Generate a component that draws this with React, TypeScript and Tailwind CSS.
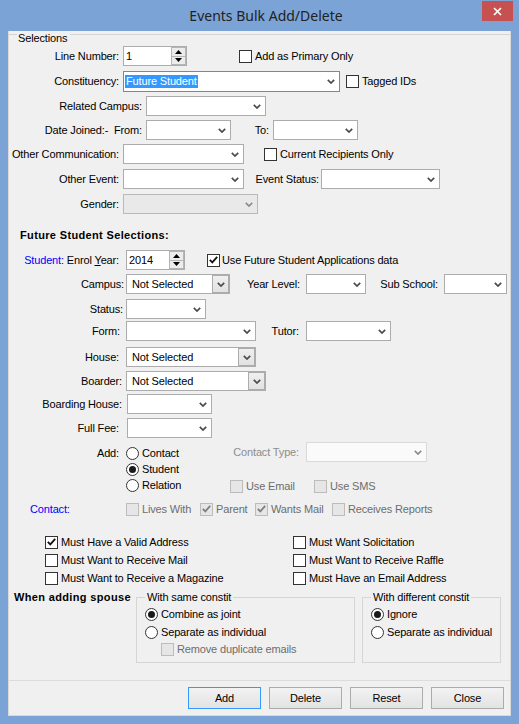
import React from "react";

type P = { className?: string; children?: React.ReactNode };

function Chevron({ disabled = false }: { disabled?: boolean }) {
  return (
    <svg width="8" height="5" viewBox="0 0 8 5" className="block">
      <path d="M0.8 0.8 L4 4 L7.2 0.8" fill="none" stroke={disabled ? "#8c8c8c" : "#4a4a4a"} strokeWidth="1.7" />
    </svg>
  );
}

function Lbl({ className = "", children }: P) {
  return <span className={`text-right whitespace-nowrap shrink-0 ${className}`}>{children}</span>;
}

function Combo({ className = "", children, variant = "normal" }: P & { variant?: "normal" | "disabled" | "light" }) {
  const box =
    variant === "disabled"
      ? "border-[#b9b9b9] bg-[#e9e9e9]"
      : variant === "light"
      ? "border-[#d9d9d9] bg-[#fafafa]"
      : "border-[#acacac] bg-white";
  return (
    <div className={`flex items-center h-[20px] shrink-0 border ${box} ${className}`}>
      <div className="flex-1 pl-[3px] whitespace-nowrap overflow-hidden">{children}</div>
      <div className="w-[17px] flex justify-center shrink-0">
        <Chevron disabled={variant !== "normal"} />
      </div>
    </div>
  );
}

function ComboBtn({ className = "", children }: P) {
  return (
    <div className={`flex items-center h-[20px] shrink-0 border border-[#acacac] bg-white ${className}`}>
      <div className="flex-1 pl-[5px] whitespace-nowrap overflow-hidden">{children}</div>
      <div className="w-[17px] h-full flex items-center justify-center bg-linear-to-b from-[#efefef] to-[#e2e2e2] border border-[#acacac]">
        <Chevron />
      </div>
    </div>
  );
}

function Spin({ className = "", value }: P & { value: string }) {
  return (
    <div className={`flex h-[20px] shrink-0 border border-[#acacac] bg-white ${className}`}>
      <span className="flex-1 pl-[2px] leading-[18px]">{value}</span>
      <div className="w-[15px] flex flex-col">
        <div className="flex-1 flex items-center justify-center bg-[#ececec] border border-[#b5b5b5]">
          <svg width="7" height="4" viewBox="0 0 7 4" className="block">
            <path d="M0 4 L3.5 0 L7 4Z" fill="#000" />
          </svg>
        </div>
        <div className="flex-1 flex items-center justify-center bg-[#ececec] border border-t-0 border-[#b5b5b5]">
          <svg width="7" height="4" viewBox="0 0 7 4" className="block">
            <path d="M0 0 L3.5 4 L7 0Z" fill="#000" />
          </svg>
        </div>
      </div>
    </div>
  );
}

function Check({ checked = false, disabled = false, className = "" }: { checked?: boolean; disabled?: boolean; className?: string }) {
  return (
    <span
      className={`w-[13px] h-[13px] shrink-0 border flex items-center justify-center ${
        disabled ? "border-[#bcbcbc] bg-[#e6e6e6]" : "border-[#333333] bg-white"
      } ${className}`}
    >
      {checked && (
        <svg width="9" height="8" viewBox="0 0 9 8" className="block">
          <path d="M0.8 3.8 L3.3 6.4 L8.2 0.8" fill="none" stroke={disabled ? "#7f7f7f" : "#111111"} strokeWidth="1.8" />
        </svg>
      )}
    </span>
  );
}

function Radio({ checked = false, className = "" }: { checked?: boolean; className?: string }) {
  return (
    <span className={`w-[13px] h-[13px] shrink-0 rounded-full border border-[#333333] bg-white flex items-center justify-center ${className}`}>
      {checked && <span className="w-[7px] h-[7px] rounded-full bg-[#1a1a1a]" />}
    </span>
  );
}

function Btn({ children, primary = false }: P & { primary?: boolean }) {
  return (
    <div
      className={`w-[73px] h-[22px] flex items-center justify-center border bg-linear-to-b from-[#f2f2f2] to-[#e3e3e3] ${
        primary ? "border-[#3399ff]" : "border-[#acacac]"
      }`}
    >
      {children}
    </div>
  );
}

export default function App() {
  return (
    <div className="w-[519px] h-[724px] bg-[#7ba3d6] font-['Liberation_Sans',Arial,sans-serif] text-black select-none">
      <div className="relative h-[31px] flex items-center justify-center pl-[13px]">
        <span className="font-['Noto_Sans',sans-serif] text-[14px] text-[#222222]">Events Bulk Add/Delete</span>
        <div className="absolute right-[6px] top-[1px] w-[31px] h-[20px] bg-[#c75050] flex items-center justify-center">
          <svg width="9" height="9" viewBox="0 0 9 9" className="block">
            <path d="M1 1 L8 8 M8 1 L1 8" stroke="white" strokeWidth="1.7" />
          </svg>
        </div>
      </div>

      <div className="mx-[8px] h-[685px] bg-[#f0f0f0] border-x border-b border-[#d9d9d9] flex flex-col text-[11px] tracking-[-0.15px]">
        {/* Selections legend */}
        <div className="flex items-start h-[15px] shrink-0">
          <div className="w-[8px] mt-[3px] border-t border-[#d5d5d5]" />
          <span className="leading-[13px] mt-[1px] px-[1px]">Selections</span>
          <div className="flex-1 ml-[2px] mt-[3px] border-t border-[#d5d5d5]" />
        </div>

        <div className="flex items-center h-[20px] shrink-0">
          <Lbl className="w-[110px]">Line Number:</Lbl>
          <Spin className="ml-[4px] w-[64px]" value="1" />
          <Check className="ml-[52px]" />
          <span className="ml-[3px] whitespace-nowrap">Add as Primary Only</span>
        </div>

        <div className="flex items-center h-[21px] mt-[5px] shrink-0">
          <Lbl className="w-[110px]">Constituency:</Lbl>
          <div className="ml-[4px] w-[217px] h-[21px] flex items-center border border-[#3399ff] bg-white">
            <div className="flex-1 pl-[1px]">
              <span className="bg-[#3399ff] text-white px-[1px] leading-[13px] inline-block">Future Student</span>
            </div>
            <div className="w-[17px] flex justify-center">
              <Chevron />
            </div>
          </div>
          <Check className="ml-[6px]" />
          <span className="ml-[3px] whitespace-nowrap">Tagged IDs</span>
        </div>

        <div className="flex items-center h-[20px] mt-[4px] shrink-0">
          <Lbl className="w-[133px]">Related Campus:</Lbl>
          <Combo className="ml-[4px] w-[120px]" />
        </div>

        <div className="flex items-center h-[20px] mt-[4px] shrink-0">
          <Lbl className="w-[133px]">Date Joined:-&nbsp; From:</Lbl>
          <Combo className="ml-[4px] w-[85px]" />
          <Lbl className="w-[38px]">To:</Lbl>
          <Combo className="ml-[4px] w-[85px]" />
        </div>

        <div className="flex items-center h-[20px] mt-[4px] shrink-0">
          <Lbl className="w-[110px]">Other Communication:</Lbl>
          <Combo className="ml-[4px] w-[121px]" />
          <Check className="ml-[20px]" />
          <span className="ml-[3px] whitespace-nowrap">Current Recipients Only</span>
        </div>

        <div className="flex items-center h-[20px] mt-[5px] shrink-0">
          <Lbl className="w-[110px]">Other Event:</Lbl>
          <Combo className="ml-[4px] w-[121px]" />
          <Lbl className="w-[75px]">Event Status:</Lbl>
          <Combo className="ml-[2px] w-[119px]" />
        </div>

        <div className="flex items-center h-[20px] mt-[5px] shrink-0">
          <Lbl className="w-[110px]">Gender:</Lbl>
          <Combo className="ml-[4px] w-[135px]" variant="disabled" />
        </div>

        <div className="h-[14px] mt-[14px] pl-[11px] font-bold tracking-[0.35px] leading-[14px] shrink-0">
          Future Student Selections:
        </div>

        <div className="flex items-center h-[20px] mt-[8px] shrink-0">
          <Lbl className="w-[110px]">
            <span className="text-[#0000ff]">Student:</span> Enrol <span className="underline">Y</span>ear:
          </Lbl>
          <Spin className="ml-[7px] w-[59px]" value="2014" />
          <Check className="ml-[22px]" checked />
          <span className="ml-[2px] whitespace-nowrap">Use Future Student Applications data</span>
        </div>

        <div className="flex items-center h-[20px] mt-[4px] shrink-0">
          <Lbl className="w-[115px]">Campus:</Lbl>
          <ComboBtn className="ml-[2px] w-[104px]">Not Selected</ComboBtn>
          <Lbl className="w-[70px]">Year Level:</Lbl>
          <Combo className="ml-[6px] w-[60px]" />
          <Lbl className="w-[72px]">Sub School:</Lbl>
          <Combo className="ml-[6px] w-[63px]" />
        </div>

        <div className="flex items-center h-[20px] mt-[5px] shrink-0">
          <Lbl className="w-[114px]">Status:</Lbl>
          <Combo className="ml-[3px] w-[80px]" />
        </div>

        <div className="flex items-center h-[20px] mt-[2px] shrink-0">
          <Lbl className="w-[111px]">Form:</Lbl>
          <Combo className="ml-[6px] w-[130px]" />
          <Lbl className="w-[43px]">Tutor:</Lbl>
          <Combo className="ml-[7px] w-[85px]" />
        </div>

        <div className="flex items-center h-[20px] mt-[6px] shrink-0">
          <Lbl className="w-[110px]">House:</Lbl>
          <ComboBtn className="ml-[7px] w-[130px]">Not Selected</ComboBtn>
        </div>

        <div className="flex items-center h-[20px] mt-[4px] shrink-0">
          <Lbl className="w-[113px]">Boarder:</Lbl>
          <ComboBtn className="ml-[4px] w-[140px]">Not Selected</ComboBtn>
        </div>

        <div className="flex items-center h-[20px] mt-[3px] shrink-0">
          <Lbl className="w-[113px]">Boarding House:</Lbl>
          <Combo className="ml-[5px] w-[85px]" />
        </div>

        <div className="flex items-center h-[20px] mt-[4px] shrink-0">
          <Lbl className="w-[110px]">Full Fee:</Lbl>
          <Combo className="ml-[8px] w-[85px]" />
        </div>

        {/* Add block */}
        <div className="flex h-[51px] mt-[4px] shrink-0">
          <div className="w-[213px] flex flex-col pt-[3px]">
            <div className="flex items-center h-[16px]">
              <Lbl className="w-[110px]">Add:</Lbl>
              <Radio className="ml-[7px]" />
              <span className="ml-[3px]">Contact</span>
            </div>
            <div className="flex items-center h-[16px] pl-[117px]">
              <Radio checked />
              <span className="ml-[3px]">Student</span>
            </div>
            <div className="flex items-center h-[16px] pl-[117px]">
              <Radio />
              <span className="ml-[3px]">Relation</span>
            </div>
          </div>
          <div className="flex flex-col">
            <div className="flex items-center h-[20px]">
              <Lbl className="w-[77px] text-[#8d8d8d]">Contact Type:</Lbl>
              <Combo className="ml-[7px] w-[121px]" variant="light" />
            </div>
            <div className="flex items-center h-[14px] mt-[17px] text-[#6d6d6d]">
              <div className="w-[84px] ml-[8px] flex items-center">
                <Check disabled />
                <span className="ml-[3px] whitespace-nowrap">Use Email</span>
              </div>
              <Check disabled />
              <span className="ml-[3px] whitespace-nowrap">Use SMS</span>
            </div>
          </div>
        </div>

        {/* Contact row */}
        <div className="flex items-center h-[14px] mt-[9px] shrink-0 text-[#6d6d6d]">
          <span className="w-[117px] pl-[21px] text-[#0000ff] shrink-0">Contact:</span>
          <div className="w-[74px] flex items-center shrink-0">
            <Check disabled />
            <span className="ml-[3px] whitespace-nowrap">Lives With</span>
          </div>
          <div className="w-[55px] flex items-center shrink-0">
            <Check disabled checked />
            <span className="ml-[3px] whitespace-nowrap">Parent</span>
          </div>
          <div className="w-[77px] flex items-center shrink-0">
            <Check disabled checked />
            <span className="ml-[3px] whitespace-nowrap">Wants Mail</span>
          </div>
          <div className="flex items-center shrink-0">
            <Check disabled />
            <span className="ml-[3px] whitespace-nowrap">Receives Reports</span>
          </div>
        </div>

        {/* Checkbox grid */}
        <div className="mt-[17px] grid grid-cols-[248px_1fr] pl-[36px] shrink-0">
          {[
            ["Must Have a Valid Address", true],
            ["Must Want Solicitation", false],
            ["Must Want to Receive Mail", false],
            ["Must Want to Receive Raffle", false],
            ["Must Want to Receive a Magazine", false],
            ["Must Have an Email Address", false],
          ].map(([t, c]) => (
            <div key={t as string} className="flex items-center h-[18px]">
              <Check checked={c as boolean} />
              <span className="ml-[3px] whitespace-nowrap">{t as string}</span>
            </div>
          ))}
        </div>

        {/* Spouse */}
        <div className="flex items-start h-[73px] mt-[3px] shrink-0">
          <span className="w-[127px] pl-[5px] font-bold tracking-[0.35px] leading-[14px] whitespace-nowrap shrink-0">
            When adding spouse
          </span>
          <fieldset className="w-[219px] h-[73px] border border-[#d5d5d5] shrink-0">
            <legend className="ml-[8px] px-[2px] leading-[14px]">With same constit</legend>
            <div className="pt-[1px] pl-[8px]">
              <div className="flex items-center h-[18px]">
                <Radio checked />
                <span className="ml-[3px]">Combine as joint</span>
              </div>
              <div className="flex items-center h-[18px]">
                <Radio />
                <span className="ml-[3px]">Separate as individual</span>
              </div>
              <div className="flex items-center h-[17px] pl-[16px] text-[#6d6d6d]">
                <Check disabled />
                <span className="ml-[3px]">Remove duplicate emails</span>
              </div>
            </div>
          </fieldset>
          <fieldset className="w-[139px] h-[73px] ml-[7px] border border-[#d5d5d5] shrink-0">
            <legend className="ml-[8px] px-[2px] leading-[14px]">With different constit</legend>
            <div className="pt-[1px] pl-[8px]">
              <div className="flex items-center h-[18px]">
                <Radio checked />
                <span className="ml-[3px]">Ignore</span>
              </div>
              <div className="flex items-center h-[18px]">
                <Radio />
                <span className="ml-[3px] whitespace-nowrap">Separate as individual</span>
              </div>
            </div>
          </fieldset>
        </div>

        <div className="mt-[17px] border-t border-[#dcdcdc] shrink-0" />

        <div className="flex justify-end gap-[8px] pr-[6px] mt-[6px] shrink-0">
          <Btn primary>Add</Btn>
          <Btn>Delete</Btn>
          <Btn>Reset</Btn>
          <Btn>Close</Btn>
        </div>
      </div>
    </div>
  );
}
